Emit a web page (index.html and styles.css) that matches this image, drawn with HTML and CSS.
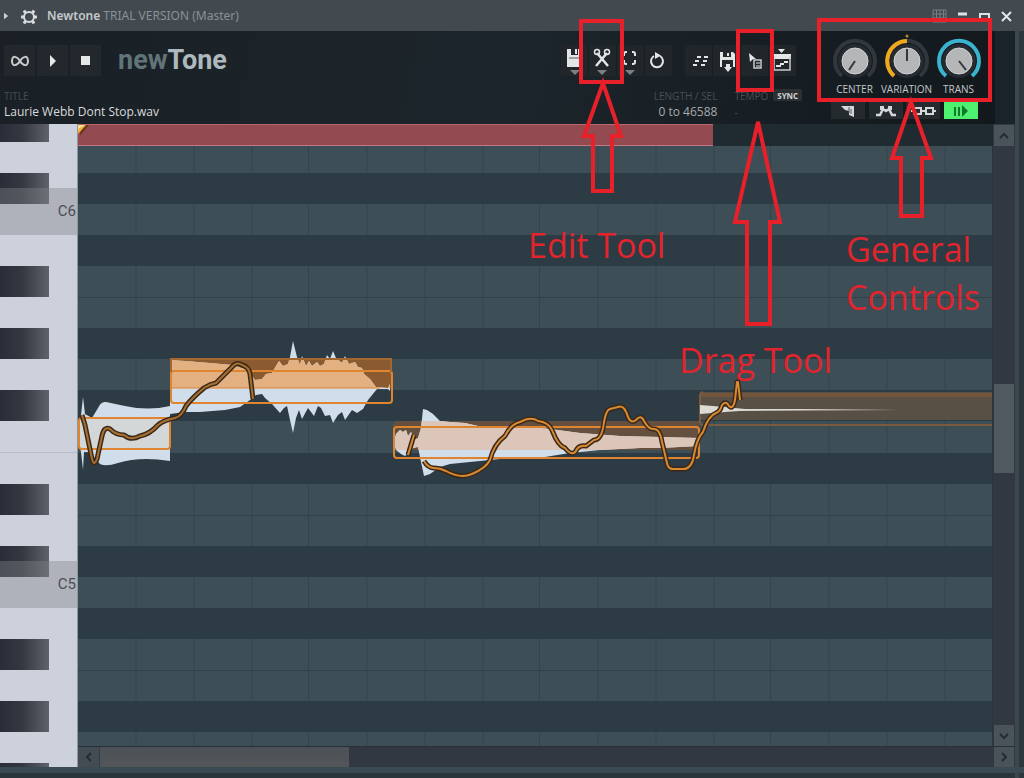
FILE: index.html
```html
<!DOCTYPE html>
<html lang="en">
<head>
<meta charset="utf-8">
<title>Newtone</title>
<link rel="stylesheet" href="styles.css">
</head>
<body>
<div class="app">
  <header class="titlebar">
    <svg class="caret" viewBox="0 0 6 8"><path d="M0 0L5 4L0 8Z"/></svg>
    <button class="plain" aria-label="Options">
      <svg width="18" height="18" viewBox="0 0 18 18"><circle cx="9" cy="9" r="5" fill="none" stroke="#d9dcde" stroke-width="2"/><path d="M5.500 5L4 2.500M12.500 5L14 2.500M4 9H1M14 9H17M5.500 13L4 15.500M12.500 13L14 15.500" stroke="#d9dcde" stroke-width="3"/></svg>
    </button>
    <h1 class="caption"><b>Newtone</b> TRIAL VERSION (Master)</h1>
    <div class="winbuttons">
      <button class="plain" aria-label="Grid"><svg width="15" height="14" viewBox="0 0 15 14"><path d="M1 1H14V13H1ZM1 5H14M1 9H14M4.500 1V13M8 1V13M11.500 1V13" fill="none" stroke="#778086"/></svg></button>
      <button class="plain" aria-label="Minimize"><svg width="10" height="14" viewBox="0 0 10 14"><path d="M0 5H9" stroke="#dfe2e4" stroke-width="3"/></svg></button>
      <button class="plain" aria-label="Maximize"><svg width="11" height="14" viewBox="0 0 11 14"><path d="M1 10V5H10V10" fill="none" stroke="#dfe2e4" stroke-width="2"/></svg></button>
      <button class="plain" aria-label="Close"><svg width="12" height="14" viewBox="0 0 12 14"><path d="M1 3L10 12M10 3L1 12" stroke="#e4e6e8" stroke-width="2"/></svg></button>
    </div>
  </header>

  <section class="panel">
    <div class="left">
      <div class="brandrow">
        <div class="transport">
          <button class="key" aria-label="Loop"><svg width="20" height="14" viewBox="0 0 20 14"><path d="M10 7C7 2 2 1 2 7S7 12 10 7C13 2 18 1 18 7S13 12 10 7Z" fill="none" stroke="#c9cccd" stroke-width="2"/></svg></button>
          <button class="key" aria-label="Play"><svg width="8" height="12" viewBox="0 0 8 12"><path d="M1 0L7 6L1 12Z" fill="#e6e7e7"/></svg></button>
          <button class="key" aria-label="Stop"><svg width="9" height="9" viewBox="0 0 9 9"><path d="M0 0H9V9H0Z" fill="#e6e7e7"/></svg></button>
        </div>
        <div class="logo"><span>new</span>Tone</div>
      </div>
      <div class="label">TITLE</div>
      <div class="value">Laurie Webb Dont Stop.wav</div>
    </div>

    <div class="tools">
      <div class="toolrow">
        <div class="group">
          <button class="tool" aria-label="Save"><svg width="26" height="30" viewBox="0 0 26 30"><path d="M5 3H18L20 5V21H5Z" fill="#e4e6e6"/><path d="M9 3V9H16V3" fill="#22282c"/><path d="M13 3H15V8H13Z" fill="#e4e6e6"/><path d="M7 12H18" stroke="#555b60"/><path d="M8 24H18L13 29Z" fill="#7b8083"/></svg></button>
          <button class="tool" aria-label="Edit"><svg width="26" height="30" viewBox="0 0 26 30"><path d="M7 7L18 20M17 7L6 20" stroke="#e4e6e6" stroke-width="2.500"/><circle cx="7" cy="6" r="2.500" fill="none" stroke="#e4e6e6" stroke-width="1.500"/><circle cx="17" cy="6" r="2.500" fill="none" stroke="#e4e6e6" stroke-width="1.500"/><path d="M7 24H17L12 29Z" fill="#7b8083"/></svg></button>
          <button class="tool" aria-label="View"><svg width="26" height="30" viewBox="0 0 26 30"><path d="M9 6H8Q6 6 6 8V10M14 6H15Q17 6 17 8V10M6 14V16Q6 18 8 18H9M17 14V16Q17 18 15 18H14" fill="none" stroke="#e4e6e6" stroke-width="2"/><path d="M7 24H17L12 29Z" fill="#7b8083"/></svg></button>
          <button class="tool" aria-label="Reload"><svg width="26" height="30" viewBox="0 0 26 30"><path d="M14 10A6 6 0 1 1 8 10" fill="none" stroke="#e4e6e6" stroke-width="2"/><path d="M9 6L15 9.500L9 13Z" fill="#e4e6e6"/></svg></button>
        </div>
        <div class="group">
          <button class="tool" aria-label="Send to score"><svg width="26" height="30" viewBox="0 0 26 30"><path d="M11 11H15M18 11H22M9 15H13M17 15H21M7 19H11M15 19H19" stroke="#e4e6e6" stroke-width="2"/></svg></button>
          <button class="tool" aria-label="Save as"><svg width="26" height="30" viewBox="0 0 26 30"><path d="M6 6H19L21 8V21H6Z" fill="#e4e6e6"/><path d="M9 6V11H17V6M8 14H19V21H8Z" fill="#22282c"/><path d="M13 7H15V10H13Z" fill="#e4e6e6"/><path d="M10 21H12V18H16V21H18L14 26Z" fill="#e4e6e6"/></svg></button>
          <button class="tool" aria-label="Drag"><svg width="26" height="30" viewBox="0 0 26 30"><path d="M7 7L14 13L11 13L8 16Z" fill="#e4e6e6"/><path d="M12 14H19V22H12Z" fill="none" stroke="#c9cccd" stroke-width="1.500"/><path d="M14 17H18M14 20H18" stroke="#e4e6e6"/></svg></button>
          <button class="tool" aria-label="Send to playlist"><svg width="26" height="30" viewBox="0 0 26 30"><path d="M8 3H15L11.500 7Z" fill="#e4e6e6"/><path d="M3 8H21V13H3Z" fill="#e4e6e6"/><path d="M4 10V24H20V10" fill="none" stroke="#c9cccd" stroke-width="1.500"/><path d="M6 20H11M10 18H14M14 16H18" fill="none" stroke="#e4e6e6" stroke-width="2"/></svg></button>
        </div>
      </div>
      <div class="inforow">
        <div class="info"><div class="label">LENGTH / SEL</div><div class="value dim">0 to 46588</div></div>
        <div class="tempo"><div class="label">TEMPO</div><div class="label">-</div></div>
        <button class="sync">SYNC</button>
      </div>
    </div>

    <div class="controls">
      <div class="knobs">
        <div class="knob"><svg width="46" height="50" viewBox="0 0 46 50"><path d="M10 42A20 20 0 1 1 36 42" class="ring"/><circle cx="23" cy="27" r="17" fill="#252b31"/><circle cx="23" cy="27" r="13" class="cap"/><path d="M23 27L17 36" class="hand"/></svg>CENTER</div>
        <div class="knob"><svg width="46" height="50" viewBox="0 0 46 50"><path d="M10 42A20 20 0 1 1 36 42" class="ring"/><path d="M10 42A20 20 0 0 1 23 7" class="ring amber"/><circle cx="23" cy="2" r="1.500" fill="#b38a3a"/><circle cx="23" cy="27" r="17" fill="#252b31"/><circle cx="23" cy="27" r="13" class="cap"/><path d="M23 27V15" class="hand"/></svg>VARIATION</div>
        <div class="knob"><svg width="46" height="50" viewBox="0 0 46 50"><path d="M10 42A20 20 0 1 1 36 42" class="ring cyan"/><circle cx="23" cy="27" r="17" fill="#252b31"/><circle cx="23" cy="27" r="13" class="cap"/><path d="M23 27L30 36" class="hand"/></svg>TRANS</div>
      </div>
      <div class="switches">
        <button class="switch" aria-label="Slave"><svg width="34" height="18" viewBox="0 0 34 18"><path d="M10 4H23V15L18 13V9L14 8Z" fill="#d5d8d8"/><path d="M18 5V11M20 7V12" stroke="#555b60"/></svg></button>
        <button class="switch" aria-label="Slice"><svg width="34" height="18" viewBox="0 0 34 18"><path d="M7 13H11L14 7L17 9L20 7L23 13H27" fill="none" stroke="#d5d8d8" stroke-width="2.500"/><path d="M11 4H15V8H11ZM19 4H23V8H19Z" fill="#d5d8d8"/></svg></button>
        <button class="switch" aria-label="Link"><svg width="34" height="18" viewBox="0 0 34 18"><path d="M5 9H8M15 9H20M27 9H30" stroke="#d5d8d8" stroke-width="2"/><path d="M8 6H15V12H8ZM20 6H27V12H20Z" fill="none" stroke="#d5d8d8" stroke-width="2"/></svg></button>
        <button class="switch on" aria-label="Scroll"><svg width="34" height="18" viewBox="0 0 34 18"><path d="M11 5V14M15 5V14" stroke="#0f7a2a" stroke-width="2"/><path d="M18 3L24 9L18 15Z" fill="#0f7a2a"/></svg></button>
      </div>
    </div>
  </section>

  <main class="editor">
    <div class="piano">
      <i class="black h18"></i><i class="gap31"></i><i class="black"></i><i class="gap62"></i><i class="black"></i><i class="gap31"></i><i class="black"></i><i class="gap31"></i><i class="black"></i><i class="gap62 split"></i><i class="black"></i><i class="gap31"></i><i class="black"></i><i class="gap62"></i><i class="black"></i><i class="gap31"></i><i class="black"></i><i class="gap31"></i><i class="black last"></i>
      <span class="ckey c6">C6</span><span class="ckey c5">C5</span>
    </div>
    <div class="ruler">
      <div class="range"><svg width="12" height="12" viewBox="0 0 12 12"><path d="M3 0H11L2 11Z" fill="#6a3a20"/><path d="M0 0H8L0 9Z" fill="#f2b33a"/><path d="M0 0H7L0 4Z" fill="#fbe29a"/></svg></div>
    </div>
    <div class="roll">
      <i></i><i class="d"></i><i></i><i class="d"></i><i></i><i class="l"></i><i class="d"></i><i></i><i class="d"></i><i></i><i class="d"></i><i></i><i class="l"></i><i class="d"></i><i></i><i class="d"></i><i></i><i class="l"></i><i class="d"></i><i></i>
      <svg class="notes" aria-label="Notes">
        <defs>
          <clipPath id="n1"><path d="M79 418H170V449H79Z"/></clipPath>
          <clipPath id="n2"><path d="M170 358H392V388H170Z"/></clipPath>
          <clipPath id="n3"><path d="M393 421H699V450H393Z"/></clipPath>
          <path id="w1" d="M79 424L81 415L83 397L85 414L92 418L98 408Q101 401 106 402L125 406Q148 411 170 406V461Q140 456 118 463Q106 467 100 464L93 456L88 452L84 452L83 470L81 452L79 442Z"/>
          <path id="w2" d="M170 360L185 361L210 363L232 365L248 370L252 376L255 380L262 379L266 374L272 373L276 366L279 361L283 366L288 364L290 357L293 341L297 357L300 365L302 356L306 366L309 361L312 366L317 362L320 366L324 364L327 355L330 359L333 351L336 358L342 363L345 356L349 364L355 362L358 367L362 368L364 374L370 379L376 387L388 388L390 384V391L388 389H377L368 400L363 409L357 413L352 410L345 420L342 412L338 415L333 423L330 415L325 416L321 408L318 406L314 416L308 408L302 419L299 410L296 418L293 433L290 420L287 406L284 408L280 413L272 404L265 398L262 394L256 395L250 400L240 407L225 410L200 412L185 412L170 414Z"/>
          <path id="w3" d="M394 442L396 434L400 430L403 432L406 430L408 436L411 432L414 440L418 438L421 428L423 409L427 410L433 414L440 421L450 422L465 423L478 426L500 427L530 427L550 429L580 433L620 436L660 437L699 438V446L660 448L640 448L600 450L570 453L545 457L520 459L500 459L480 461L450 464L440 467L430 474L424 476L421 462L418 447L413 448L408 453L405 456L401 454L396 450Z"/>
          <path id="c1" d="M82 415L85 425L92 459Q94 467 97 459L102 436Q104 426 110 429Q116 435 124 435Q131 441 140 436Q150 434 158 425Q164 420 175 418Q182 416 186 406Q192 398 204 388Q210 384 216 383L234 365Q238 362 242 365Q249 367 250 374L253 399"/>
          <path id="c2" d="M408 455L414 435M424 461Q428 468 434 468T446 471Q460 479 472 474Q486 468 490 460Q494 444 505 436Q511 424 520 422Q531 416 538 421Q548 422 552 430Q558 446 565 448Q573 458 577 449Q580 445 586 446L594 440Q602 440 604 422Q606 410 610 409Q614 408 618 407Q624 404 628 417Q631 424 636 420Q641 414 644 421Q649 430 654 429Q660 429 662 442L667 463Q668 469 673 469H683Q692 469 694 455Q697 438 703 432Q708 416 716 413Q720 412 722 405Q726 400 729 406Q733 410 735 400L737 382H738L740 400"/>
        </defs>
        <g transform="translate(-78 -146)">
          <path d="M700 392H3000V420H700Z" fill="#585045"/>
          <path d="M700 395H3000" stroke="#73553b" stroke-width="4"/>
          <path d="M3000 425H703Q700 425 700 421V396Q700 393 703 392" class="faint"/>
          <path d="M700 405L725 407L745 409L800 409L900 410L800 410.500L740 411L725 412L700 414Z" fill="#dcdad3"/>
          <path d="M170 358H390L392 360V388H170Z" fill="#8a5a30"/>
          <path d="M393 424L396 421H699V450H393Z" fill="#65503f"/>
          <use href="#w1" fill="#cfdeea"/><use href="#w2" fill="#cfdeea"/><use href="#w3" fill="#cfdeea"/>
          <use href="#w1" fill="#d4d7d7" clip-path="url(#n1)"/>
          <use href="#w2" fill="#e2b081" clip-path="url(#n2)"/>
          <use href="#w3" fill="#dbc6b9" clip-path="url(#n3)"/>
          <rect x="79" y="418" width="91" height="31" rx="3" class="box"/>
          <rect x="171" y="371" width="221" height="32" rx="3" class="box"/>
          <path d="M171 388H380" class="box soft"/>
          <path d="M171 372V359H391V372" class="box edge"/>
          <rect x="394" y="427" width="305" height="31" rx="3" class="box"/>
          <use href="#c1" class="under"/><use href="#c1" class="over thick"/>
          <use href="#c2" class="under"/><use href="#c2" class="over"/>
        </g>
      </svg>
    </div>
    <div class="vscroll">
      <button class="arrow" aria-label="Up"><svg width="10" height="8" viewBox="0 0 10 8"><path d="M1 6L5 2L9 6"/></svg></button>
      <div class="track"><div class="thumb"></div></div>
      <button class="arrow" aria-label="Down"><svg width="10" height="8" viewBox="0 0 10 8"><path d="M1 2L5 6L9 2"/></svg></button>
    </div>
    <div class="hscroll">
      <button class="arrow flat" aria-label="Left"><svg width="8" height="10" viewBox="0 0 8 10"><path d="M6 1L2 5L6 9"/></svg></button>
      <div class="thumb"></div>
      <button class="arrow end" aria-label="Right"><svg width="8" height="10" viewBox="0 0 8 10"><path d="M2 1L6 5L2 9"/></svg></button>
    </div>
  </main>

  <div class="callouts">
    <svg viewBox="500 0 524 400" width="524" height="400">
      <g fill="none" stroke="#e8202a" stroke-width="4">
        <path d="M581 21H622V82H581Z"/>
        <path d="M738 31H772V90H738Z"/>
        <path d="M819 20H990V100H819Z"/>
        <path d="M603 83L584 136H593V191H612V136H621Z"/>
        <path d="M758 122L735 222H747V324H770V222H780Z"/>
        <path d="M911 102L892 158H901V216H922V158H931Z"/>
      </g>
    </svg>
    <span class="note edit">Edit Tool</span>
    <span class="note drag">Drag Tool</span>
    <span class="note general">General<br>Controls</span>
  </div>
</div>
</body>
</html>
```
FILE: styles.css
```css
* { box-sizing: border-box; }
body { margin: 0; background: #2c373e; font-family: "Open Sans", "Noto Sans", sans-serif; color: #d5d8da; }
button { border: 0; padding: 0; margin: 0; background: none; color: inherit; font: inherit; display: flex; align-items: center; justify-content: center; }
svg { display: block; }
.app { position: relative; min-height: 100vh; display: flex; flex-direction: column; padding: 0 9px 11px 0; overflow: hidden;
  background: linear-gradient(#3b4a52, #3b4a52) bottom 5px left 0 / 100% 6px no-repeat, linear-gradient(90deg, #3b474e 4px, #2b363d 4px) right / 9px 100% no-repeat, #2a343b; }

.titlebar { height: 31px; margin-right: -9px; display: flex; align-items: center; padding: 0 11px 0 4px; background: #42494f; }
.caret { width: 5px; height: 8px; fill: #cfd2d4; }
.titlebar > .plain { margin: 2px 9px 0 11px; }
.caption { margin: 0; font: 400 12px/16px "Noto Sans", "Open Sans", sans-serif; color: #8b9195; }
.caption b { font-weight: 600; color: #c6cacd; }
.winbuttons { margin-left: auto; display: flex; gap: 11px; }

.panel { height: 93px; display: flex; background: linear-gradient(90deg, transparent 0 98%, #1b232a 98%), linear-gradient(100deg, #1a2025, #1c252b 50%, #12181c); }
.left { padding: 14px 0 0 4px; }
.brandrow { display: flex; align-items: center; height: 31px; margin-bottom: 12px; }
.transport { display: flex; gap: 2px; }
.key { width: 31px; height: 31px; background: #23282c; }
.logo { margin-left: 17px; font: bold 27px/31px Roboto, "Liberation Sans", sans-serif; color: #adb9bc; }
.logo span { color: #617479; }
.label { font-size: 10px; line-height: 16px; color: #484e53; }
.value { font-size: 12px; line-height: 16px; color: #d8dadc; }
.dim { color: #a4a9ac; }
.tools { margin-left: auto; padding-top: 14px; width: 235px; }
.toolrow { display: flex; justify-content: space-between; }
.group { display: flex; gap: 1px; background: #191e22; }
.tool { width: 27px; height: 31px; background: #20262a; }
.inforow { display: flex; align-items: flex-start; padding-top: 12px; }
.info { width: 158px; text-align: right; }
.tempo { width: 40px; margin-left: 17px; }
.sync { width: 30px; height: 12px; margin-top: 1px; border-radius: 2px; background: #2d3033; font-size: 8px; font-weight: 700; color: #cfd2d4; }
.controls { width: 184px; margin-left: 29px; padding-right: 33px; }
.tools, .controls { flex: none; }
.inforow { margin: 0 -6px 0 6px; }
.tempo { width: 41px; }
.knobs { display: flex; justify-content: space-between; padding-top: 3px; }
.knob { width: 47px; display: flex; flex-direction: column; align-items: center; font-size: 10px; line-height: 11px; color: #c3c7c9; white-space: nowrap; height: 68px; }
.ring { fill: none; stroke: #31373d; stroke-width: 4; }
.amber { stroke: #f0a81e; }
.cyan { stroke: #38b4cf; }
.cap { fill: #b4b6b8; stroke: #d0d2d3; stroke-width: 1; }
.hand { fill: none; stroke: #33383c; stroke-width: 2; }
.switches { display: flex; justify-content: space-between; width: 147px; }
.switch { width: 34px; height: 17px; background: #252a2e; }
.on { background: #4df06f; }
.controls { margin-left: 35px; }

.editor { flex: 1; display: grid; grid-template-columns: 78px 1fr 22px; grid-template-rows: 22px 1fr 21px; }
.piano { grid-row: 1 / 4; position: relative; display: flex; flex-direction: column; background: #cdd1dc; border-right: 1px solid #8f98a1; overflow: hidden; }
.black { width: 49px; height: 31px; background: linear-gradient(90deg, #292d37, #353841 45%, #5f626b); }
.h18 { height: 18px; }
.gap31 { height: 31px; }
.gap62 { flex: 1 0 62px; }
.split { background: linear-gradient(#b9bdc8, #b9bdc8) 0 50% / 100% 1px no-repeat; }
.last { height: 4px; }
.ckey { position: absolute; left: 0; right: 0; height: 47px; padding-right: 1px; text-align: right; font: 15px/46px Roboto, sans-serif; color: #4b4e56; background: rgba(130, 132, 138, 0.4); }
.c6 { top: 64px; }
.c5 { top: 437px; }
.ruler { background: #1f2a31; }
.range { width: 69.4%; height: 22px; background: #934a50; border-top: 1px solid #b9666e; border-bottom: 1px solid #c27880; }
.roll { position: relative; overflow: hidden; display: grid; grid-template-rows: 27fr repeat(18, 31fr) 14fr; border-right: 1px solid #2a343b; }
.roll i { background: repeating-linear-gradient(90deg, transparent 0 57px, #394951 57px 59px, transparent 59px 115px, #394951 115px 117px, transparent 117px 173px, #394951 173px 175px, transparent 175px 230px, #33434b 230px 231px), #3e4e57; }
.roll .d { background: #2c3b44; }
.roll .l { border-top: 1px solid #31414a; }
.notes { position: absolute; inset: 0; width: 100%; height: 100%; }
.box { fill: none; stroke: #e0852f; stroke-width: 2; }
.soft { stroke-width: 1; }
.edge { stroke: #a3682f; }
.faint { fill: none; stroke: #7b5b3f; stroke-width: 2; }
.under { fill: none; stroke: #3a291b; stroke-width: 5; stroke-linejoin: round; }
.over { fill: none; stroke: #d98a30; stroke-width: 2; stroke-linejoin: round; }
.thick { stroke: #a8702f; }

.vscroll { grid-row: 1 / 3; grid-column: 3; display: flex; flex-direction: column; background: #323841; padding: 1px 1px 0; }
.vscroll .arrow { height: 21px; }
.arrow { background: #4a535a; }
.arrow svg { fill: none; stroke: #252c32; stroke-width: 2; }
.track { flex: 1; display: flex; flex-direction: column; }
.track::before { content: ""; flex: 238; }
.track::after { content: ""; flex: 252; }
.track .thumb { flex: 89; background: #50595f; }
.hscroll { grid-column: 2 / 4; display: flex; background: #323841; border-top: 1px solid #27313a; padding-right: 1px; }
.hscroll .arrow { width: 22px; }
.hscroll .flat { background: #434c53; border-right: 1px solid #343b43; }
.hscroll .end { width: 20px; margin-left: auto; }
.hscroll .thumb { width: 26.6%; background: linear-gradient(#4b5157, #535659); }

.callouts { position: absolute; top: 0; right: 0; width: 524px; height: 400px; pointer-events: none; }
.note { position: absolute; font-size: 34px; line-height: 48px; color: #e3242d; white-space: nowrap; }
.edit { left: 28px; top: 221px; }
.drag { left: 179px; top: 336px; }
.general { left: 346px; top: 225px; }
```
